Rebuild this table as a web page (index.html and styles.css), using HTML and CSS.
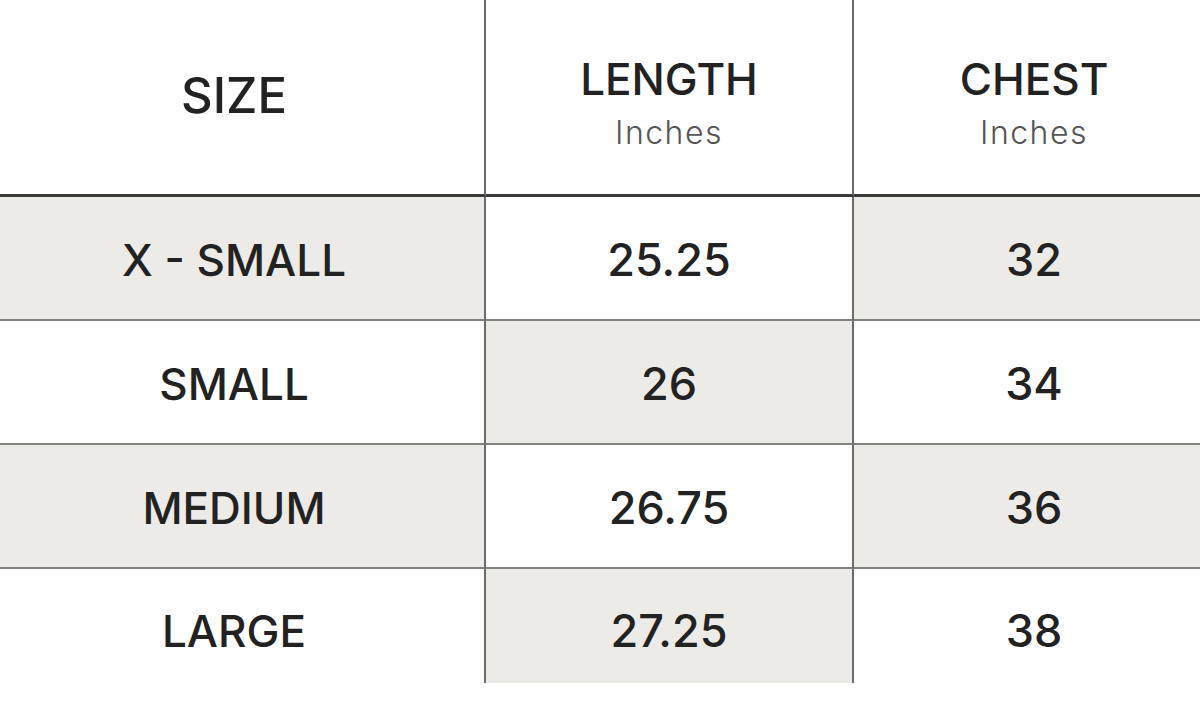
FILE: index.html
```html
<!DOCTYPE html>
<html lang="en">
<head>
<meta charset="utf-8">
<title>Size Chart</title>
<link rel="stylesheet" href="styles.css">
</head>
<body>
<div class="chart">
  <div class="cell head c1"><span class="title big">SIZE</span></div>
  <div class="cell head c2"><span class="title">LENGTH</span><span class="unit">Inches</span></div>
  <div class="cell head c3"><span class="title">CHEST</span><span class="unit">Inches</span></div>

  <div class="cell row c1 shade">X - SMALL</div>
  <div class="cell row c2">25.25</div>
  <div class="cell row c3 shade">32</div>

  <div class="cell row c1">SMALL</div>
  <div class="cell row c2 shade">26</div>
  <div class="cell row c3">34</div>

  <div class="cell row c1 shade">MEDIUM</div>
  <div class="cell row c2">26.75</div>
  <div class="cell row c3 shade">36</div>

  <div class="cell last c1">LARGE</div>
  <div class="cell last c2 shade">27.25</div>
  <div class="cell last c3">38</div>
</div>
</body>
</html>
```
FILE: styles.css
```css
html, body {
  margin: 0;
  padding: 0;
  background: #ffffff;
  overflow: hidden;
}

body {
  font-family: "Inter", "Lato", "Liberation Sans", sans-serif;
  color: #222222;
}

.chart {
  display: grid;
  grid-template-columns: 486px 368px 1fr;
  grid-template-rows: 197px 124px 124px 124px 114px;
  width: 1200px;
}

.cell {
  display: flex;
  flex-direction: column;
  align-items: center;
  justify-content: center;
  box-sizing: border-box;
  background: #ffffff;
  font-size: 45px;
  font-weight: 500;
  line-height: 52px;
}

.c1 {
  border-right: 2px solid #6b6b6b;
  padding-right: 16px;
  font-size: 44px;
}

.c2 {
  border-right: 2px solid #6b6b6b;
}

.c3 {
  padding-left: 14px;
}

.head {
  border-bottom: 3px solid #3a3a3a;
  padding-top: 12px;
}

.head.c1 {
  padding-top: 0;
  padding-bottom: 2px;
}

.row {
  border-bottom: 2px solid #808080;
  padding-top: 4px;
}

.last {
  padding-top: 10px;
}

.shade {
  background: #ecebe7;
}

.title {
  font-size: 44px;
  font-weight: 500;
  line-height: 52px;
}

.title.big {
  font-size: 49px;
  line-height: 60px;
}

.unit {
  margin-top: 8px;
  font-size: 32px;
  font-weight: 300;
  color: #555555;
  line-height: 40px;
  letter-spacing: 1.5px;
}
```
